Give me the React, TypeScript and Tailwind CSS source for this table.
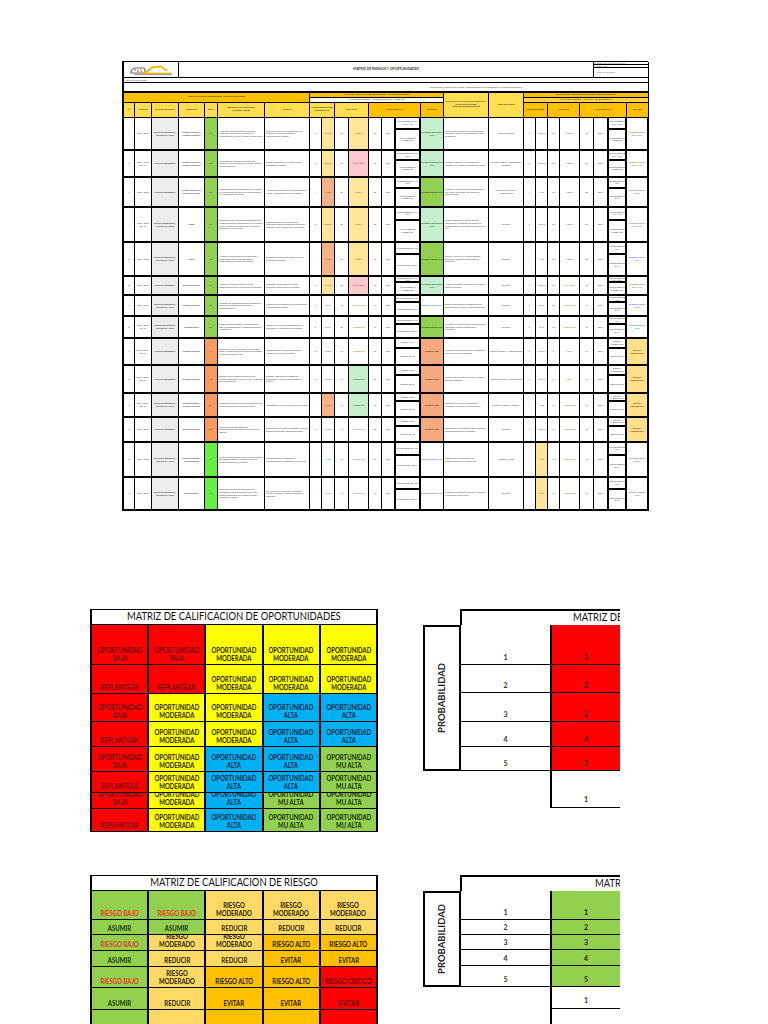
import clsx from "clsx"

const GRID =
  "grid grid-cols-[11px_17px_27px_26px_13px_47px_45px_12px_13px_14px_20px_13px_13px_26px_23px_45px_35px_12px_12px_12px_20px_14px_14px_19px_22px]"

const cell = "border-r border-b-2 border-black overflow-hidden flex items-center justify-center text-center"
const hcell = "border-r border-b border-black overflow-hidden flex items-center justify-center text-center"
const head = "border-r border-b border-black overflow-hidden flex items-center justify-center text-center font-bold text-[2.4px] leading-[2.8px] text-[#333] px-[1px]"

const G = "bg-[#92d050]"
const OR = "bg-[#f79a5e]"
const LIME = "bg-[#66ee44]"

type Lbl = [string, string, string]

type Row = {
  h: string
  f: string
  m: string
  pr: string
  d: string
  dBg: string
  de: string
  ca: string
  p: string
  pl: Lbl
  i: string
  il: Lbl
  nv: string
  sp: [string, string]
  es: Lbl
  ac: string
  rs: string
  p2: string
  pl2: Lbl
  i2: string
  il2: Lbl
  nv2: string
  sp2: [string, string]
  es2: Lbl
}

const Y: [string, string] = ["bg-[#ffe699]", "text-[#9c5700]"]
const PK: [string, string] = ["bg-[#ffc7ce]", "text-[#9c0006]"]
const SAL: [string, string] = ["bg-[#f4b183]", "text-[#333]"]
const WB: [string, string] = ["bg-white", "text-[#2f6fd0]"]
const WG: [string, string] = ["bg-white", "text-[#4f9a28]"]
const LG: [string, string] = ["bg-[#c6efce]", "text-[#006100]"]
const LM: [string, string] = ["bg-[#92d050]", "text-[#1d3a0a]"]
const OE: [string, string] = ["bg-[#f4a97e]", "text-[#5a2000]"]
const YE: [string, string] = ["bg-[#ffe08a]", "text-[#5a4000]"]

const rows: Row[] = [
  {
    h: "h-[33px]", f: "DOFA 2023", m: "Procesos Estratégicos / Procesos de Apoyo", pr: "Gestión Gerencial / Gestión Comercial", d: "O1", dBg: G,
    de: "Aumento de la demanda de alquiler de maquinaria pesada por proyectos de infraestructura vial en la región y obras civiles.",
    ca: "Inversión pública en proyectos de vías terciarias y mejoramiento de la infraestructura regional.",
    p: "3", pl: ["MEDIO", ...Y], i: "20", il: ["MEDIO", ...Y], nv: "60", sp: ["OPORTUNIDAD MUY ALTA (≥40)", "OPORTUNIDAD MODERADA"], es: ["OPORTUNIDAD MUY ALTA", ...LG],
    ac: "Realizar seguimiento a las propuestas de licitación. Ampliar la capacidad de la flota de equipos.", rs: "Gerente General",
    p2: "3", pl2: ["MEDIO", ...WB], i2: "20", il2: ["MEDIO", ...WB], nv2: "60", sp2: ["OPORTUNIDAD MUY ALTA", "OPORTUNIDAD MODERADA"], es2: ["OPORTUNIDAD MUY ALTA", ...WG],
  },
  {
    h: "h-[27px]", f: "DOFA 2023 Rev. 01", m: "Procesos Estratégicos", pr: "Gestión Gerencial / Gestión Comercial", d: "O2", dBg: G,
    de: "Posibilidad de ampliar la cobertura del servicio a nuevos clientes del sector minero y de hidrocarburos.",
    ca: "Nuevos contratos en el sector minero energético de la zona.",
    p: "3", pl: ["MEDIO", ...Y], i: "20", il: ["MUY ALTO", ...PK], nv: "60", sp: ["OPORTUNIDAD MUY ALTA", "OPORTUNIDAD MODERADA"], es: ["OPORTUNIDAD MUY ALTA", ...LG],
    ac: "Elaborar y ejecutar el plan comercial. Participar en ruedas de negocio del sector.", rs: "Gerente General / Coordinador Comercial",
    p2: "3", pl2: ["MEDIO", ...WB], i2: "20", il2: ["MEDIO", ...WB], nv2: "60", sp2: ["OPORTUNIDAD MUY ALTA", "OPORTUNIDAD MODERADA"], es2: ["OPORTUNIDAD MUY ALTA", ...WG],
  },
  {
    h: "h-[30px]", f: "DOFA 2023", m: "Procesos Estratégicos", pr: "Gestión Comercial y Servicio al Cliente", d: "O3", dBg: G,
    de: "Reconocimiento de la empresa por la calidad en la prestación del servicio y cumplimiento en los tiempos de entrega.",
    ca: "Aplicación de evaluación de satisfacción al cliente y seguimiento a los resultados.",
    p: "4", pl: ["ALTO", ...SAL], i: "20", il: ["MEDIO", ...Y], nv: "80", sp: ["OPORTUNIDAD MUY ALTA", "OPORTUNIDAD MODERADA"], es: ["OPORTUNIDAD ALTA", ...LM],
    ac: "Mantener las mediciones de satisfacción del cliente. Fortalecer los canales de comunicación.", rs: "Dirección Comercial / Administrativo",
    p2: "4", pl2: ["ALTO", ...WB], i2: "20", il2: ["MEDIO", ...WB], nv2: "80", sp2: ["OPORTUNIDAD ALTA", "OPORTUNIDAD BAJA"], es2: ["OPORTUNIDAD ALTA", ...WB],
  },
  {
    h: "h-[35px]", f: "DOFA 2023 Rev. 01", m: "Procesos Estratégicos / Procesos de Apoyo", pr: "Todos", d: "O4", dBg: G,
    de: "Implementar herramientas tecnológicas para el seguimiento de la maquinaria en los frentes de obra, control de combustible y horas de operación de los equipos.",
    ca: "Disponibilidad de proveedores de tecnología satelital. Reducción de costos operativos por el control de los recursos.",
    p: "3", pl: ["MEDIO", ...Y], i: "20", il: ["MEDIO", ...Y], nv: "60", sp: ["OPORTUNIDAD MUY ALTA", "OPORTUNIDAD MODERADA"], es: ["OPORTUNIDAD MUY ALTA", ...LG],
    ac: "Cotizar sistemas de rastreo satelital. Implementar el software de control de mantenimiento. Capacitar al personal en el uso.", rs: "Gerencia",
    p2: "3", pl2: ["MEDIO", ...WB], i2: "20", il2: ["MEDIO", ...WB], nv2: "60", sp2: ["OPORTUNIDAD MUY ALTA", "OPORTUNIDAD MODERADA"], es2: ["OPORTUNIDAD MUY ALTA", ...WG],
  },
  {
    h: "h-[34px]", f: "DOFA 2023", m: "Procesos Estratégicos / Procesos de Apoyo", pr: "Todos", d: "O5", dBg: G,
    de: "Alianzas con proveedores de repuestos y combustibles que permitan obtener descuentos por volumen de compra.",
    ca: "Relaciones comerciales estables con los proveedores críticos.",
    p: "4", pl: ["ALTO", ...SAL], i: "20", il: ["MEDIO", ...Y], nv: "80", sp: ["OPORTUNIDAD ALTA", "OPORTUNIDAD BAJA"], es: ["OPORTUNIDAD ALTA", ...LM],
    ac: "Evaluar y reevaluar a los proveedores. Establecer acuerdos comerciales de suministro.", rs: "Compras",
    p2: "4", pl2: ["ALTO", ...WB], i2: "20", il2: ["MEDIO", ...WB], nv2: "80", sp2: ["OPORTUNIDAD ALTA", "OPORTUNIDAD BAJA"], es2: ["OPORTUNIDAD ALTA", ...WB],
  },
  {
    h: "h-[19px]", f: "DOFA 2023", m: "Procesos Estratégicos", pr: "Gestión Gerencial", d: "O6", dBg: G,
    de: "Acceso a líneas de crédito con tasas preferenciales para la renovación de equipos.",
    ca: "Programas de fomento del sector financiero. Buen historial crediticio.",
    p: "3", pl: ["MEDIO", ...Y], i: "20", il: ["MUY ALTO", ...PK], nv: "60", sp: ["OPORTUNIDAD MUY ALTA", "OPORTUNIDAD MODERADA"], es: ["OPORTUNIDAD MUY ALTA", ...LG],
    ac: "Analizar las ofertas de crédito. Presentar el plan de inversión.", rs: "Gerencia",
    p2: "3", pl2: ["MEDIO", ...WB], i2: "20", il2: ["MUY ALTO", ...WG], nv2: "60", sp2: ["OPORTUNIDAD MUY ALTA", "OPORTUNIDAD MODERADA"], es2: ["OPORTUNIDAD MUY ALTA", ...WG],
  },
  {
    h: "h-[21px]", f: "DOFA 2023", m: "Procesos Estratégicos / Procesos de Apoyo", pr: "Gestión Gerencial", d: "O7", dBg: G,
    de: "Participar en convocatorias de contratación pública con entidades territoriales y departamentales.",
    ca: "Publicación de procesos en las plataformas de contratación estatal.",
    p: "2", pl: ["BAJO", ...WB], i: "20", il: ["MODERADO", ...WG], nv: "40", sp: ["OPORTUNIDAD ALTA", "OPORTUNIDAD BAJA"], es: ["OPORTUNIDAD ALTA", ...WB],
    ac: "Revisar diariamente las plataformas de contratación y preparar la documentación.", rs: "Gerencia",
    p2: "2", pl2: ["BAJO", ...WB], i2: "20", il2: ["MODERADO", ...WG], nv2: "40", sp2: ["OPORTUNIDAD ALTA", "OPORTUNIDAD BAJA"], es2: ["OPORTUNIDAD ALTA", ...WB],
  },
  {
    h: "h-[22px]", f: "DOFA 2023 Rev. 01", m: "Procesos Estratégicos / Procesos de Apoyo", pr: "Infraestructura", d: "O8", dBg: G,
    de: "Disponibilidad de patios y talleres propios para el mantenimiento y almacenamiento de la maquinaria.",
    ca: "Contar con un predio adecuado para la operación y la custodia de los equipos.",
    p: "2", pl: ["BAJO", ...WB], i: "20", il: ["MODERADO", ...WG], nv: "40", sp: ["OPORTUNIDAD ALTA", "OPORTUNIDAD BAJA"], es: ["OPORTUNIDAD ALTA", ...LM],
    ac: "Mantener las instalaciones en condiciones adecuadas. Realizar inspecciones periódicas.", rs: "Gerencia",
    p2: "2", pl2: ["BAJO", ...WB], i2: "20", il2: ["MODERADO", ...WG], nv2: "40", sp2: ["OPORTUNIDAD ALTA", "OPORTUNIDAD BAJA"], es2: ["OPORTUNIDAD ALTA", ...WB],
  },
  {
    h: "h-[27px]", f: "DOFA 2023 - Rev. 01", m: "Procesos Estratégicos", pr: "Gestión Gerencial", d: "A1", dBg: OR,
    de: "Incremento de los precios de los repuestos, llantas y combustibles que afectan los costos de operación del servicio.",
    ca: "Inestabilidad de la economía nacional. Variación de la tasa de cambio.",
    p: "3", pl: ["MEDIO", ...WB], i: "10", il: ["MODERADO", ...WG], nv: "30", sp: ["RIESGO ALTO", "RIESGO BAJO"], es: ["RIESGO ALTO", ...OE],
    ac: "Actualizar las tarifas del servicio. Negociar precios con los proveedores.", rs: "Gerencia General / Administrativo",
    p2: "3", pl2: ["MEDIO", ...WG], i2: "5", il2: ["LEVE", ...WG], nv2: "15", sp2: ["RIESGO MODERADO", "RIESGO BAJO"], es2: ["RIESGO MODERADO", ...YE],
  },
  {
    h: "h-[28px]", f: "DOFA 2023 - Rev. 01", m: "Procesos Estratégicos", pr: "Gestión Gerencial", d: "A2", dBg: OR,
    de: "Retrasos en los pagos por parte de los clientes afectando el flujo de caja y la liquidez de la organización.",
    ca: "Trámites internos de las entidades contratantes. Falta de seguimiento a la cartera.",
    p: "3", pl: ["MEDIO", ...WB], i: "10", il: ["MODERADO", ...LG], nv: "30", sp: ["RIESGO ALTO", "RIESGO BAJO"], es: ["RIESGO ALTO", ...OE],
    ac: "Realizar seguimiento semanal a la cartera. Solicitar anticipos.", rs: "Gerencia General / Contabilidad",
    p2: "3", pl2: ["MEDIO", ...WG], i2: "5", il2: ["LEVE", ...WG], nv2: "15", sp2: ["RIESGO MODERADO", "RIESGO BAJO"], es2: ["RIESGO MODERADO", ...YE],
  },
  {
    h: "h-[24px]", f: "DOFA 2023 - Rev. 01", m: "Procesos Estratégicos / Procesos de Apoyo", pr: "Gestión personal / Gestión Gerencial", d: "D1", dBg: OR,
    de: "Rotación del personal operativo calificado por mejores ofertas en el mercado laboral.",
    ca: "Competencia en el sector. Escalas salariales.",
    p: "4", pl: ["ALTO", ...SAL], i: "10", il: ["MODERADO", ...LG], nv: "40", sp: ["RIESGO ALTO", "RIESGO BAJO"], es: ["RIESGO ALTO", ...OE],
    ac: "Implementar el plan de bienestar e incentivos. Fortalecer el clima laboral.", rs: "Gestión Humana / Logística",
    p2: "4", pl2: ["ALTO", ...WB], i2: "10", il2: ["MODERADO", ...WG], nv2: "40", sp2: ["RIESGO MODERADO", "RIESGO BAJO"], es2: ["RIESGO MODERADO", ...YE],
  },
  {
    h: "h-[25px]", f: "DOFA 2023", m: "Procesos Estratégicos", pr: "Gestión Gerencial", d: "D2", dBg: OR,
    de: "Falta de documentación de los procedimientos operativos del servicio de alquiler.",
    ca: "Debilidad en el sistema de gestión. Falta de tiempo del personal. Desconocimiento.",
    p: "3", pl: ["MEDIO", ...WB], i: "10", il: ["MODERADO", ...WG], nv: "30", sp: ["RIESGO ALTO", "RIESGO BAJO"], es: ["RIESGO ALTO", ...OE],
    ac: "Documentar los procedimientos. Socializar los documentos con el personal.", rs: "Calidad",
    p2: "3", pl2: ["MEDIO", ...WB], i2: "10", il2: ["MODERADO", ...WG], nv2: "30", sp2: ["RIESGO MODERADO", "RIESGO BAJO"], es2: ["RIESGO MODERADO", ...YE],
  },
  {
    h: "h-[35px]", f: "DOFA 2023", m: "Procesos Estratégicos / Procesos de Apoyo", pr: "Gestión Logística y Mantenimiento", d: "F1", dBg: LIME,
    de: "Contar con maquinaria propia en buen estado que permite atender oportunamente los requerimientos de los clientes.",
    ca: "Cumplimiento del programa de mantenimiento preventivo de los equipos.",
    p: "4", pl: ["ALTO", ...WB], i: "10", il: ["MODERADO", ...WG], nv: "40", sp: ["OPORTUNIDAD ALTA", "OPORTUNIDAD BAJA"], es: ["OPORTUNIDAD ALTA", ...WB],
    ac: "Cumplir con el cronograma de mantenimiento de la maquinaria.", rs: "Logística / Taller",
    p2: "4", pl2: ["ALTO", ...Y], i2: "10", il2: ["MODERADO", ...WG], nv2: "40", sp2: ["OPORTUNIDAD ALTA", "OPORTUNIDAD BAJA"], es2: ["OPORTUNIDAD ALTA", ...WB],
  },
  {
    h: "h-[33px]", f: "DOFA 2023", m: "Procesos Estratégicos / Procesos de Apoyo", pr: "Infraestructura", d: "F2", dBg: LIME,
    de: "Experiencia de más de diez años en el mercado del alquiler de maquinaria, con clientes fidelizados en el sector público y privado de la región.",
    ca: "Trayectoria de la empresa. Calidad del servicio prestado y cumplimiento de los contratos.",
    p: "4", pl: ["ALTO", ...WB], i: "10", il: ["MODERADO", ...WG], nv: "40", sp: ["OPORTUNIDAD ALTA", "OPORTUNIDAD BAJA"], es: ["OPORTUNIDAD ALTA", ...WB],
    ac: "Mantener la calidad del servicio. Actualizar el portafolio de servicios.", rs: "Gerencia",
    p2: "4", pl2: ["ALTO", ...Y], i2: "10", il2: ["MODERADO", ...WG], nv2: "40", sp2: ["OPORTUNIDAD ALTA", "OPORTUNIDAD BAJA"], es2: ["OPORTUNIDAD ALTA", ...WB],
  },
]

const tiny = "text-[2.2px] leading-[2.6px] text-[#444]"
const lbl = "text-[2.2px] leading-[2.6px]"

const Logo = () => (
  <svg width="46" height="14" viewBox="0 0 46 14">
    <path d="M3 10 Q3 5 8 5 L15 5 Q17 5 17 7.5 L17 10 Z" fill="none" stroke="#6b6b6b" strokeWidth="1.2" />
    <path d="M6 7 L8 7 M10 6.5 L10 9 M12.5 6.5 L14 9" stroke="#6b6b6b" strokeWidth="1" />
    <path d="M15 10 L24 3.5 L33 2.5 L40 7.5 L38 8.2 L32.5 4.2 L25 5.2 L18.5 10 Z" fill="#f0b400" />
    <rect x="12" y="9.6" width="31" height="1.6" fill="#f0b400" />
    <rect x="6" y="11.2" width="38" height="0.9" fill="#8a8a8a" />
  </svg>
)

const Header = () => (
  <div className={clsx(GRID, "grid-rows-[16px_5px_10px_5px_5px_15px]")}>
    <div className={clsx(hcell, "col-span-3")}>
      <Logo />
    </div>
    <div className={clsx(hcell, "col-span-19 font-bold text-[3.4px] text-[#333]")}>MATRIZ DE RIESGOS Y OPORTUNIDADES</div>
    <div className="col-span-3 border-r border-b border-black flex flex-col text-[2.2px] leading-[2.6px] text-[#555]">
      <div className="h-[3px] border-b border-black px-[1px] overflow-hidden">Código: GG-MT-01 Versión: 02</div>
      <div className="h-[3px] border-b border-black px-[1px] overflow-hidden">Página 1 de 1</div>
      <div className="flex-1 flex items-center px-[2px]">Fecha: 15/03/2023</div>
    </div>
    <div className={clsx("col-span-25 border-r border-b border-black flex items-center px-[1px]", tiny)}>Fecha de actualización:</div>
    <div className={clsx("col-span-25 border-r border-b-2 border-black flex items-center pl-[306px]", tiny)}>
      Seguimiento y control de los riesgos y oportunidades de la organización y sus partes interesadas
    </div>
    <div className={clsx(head, "col-span-7 row-span-2 bg-[#ffc000]")}>IDENTIFICACION DE RIESGOS Y OPORTUNIDADES</div>
    <div className={clsx(head, "col-span-8 bg-[#ffc000]")}>ANALISIS Y EVALUACION DE RIESGOS Y OPORTUNIDADES</div>
    <div className={clsx(head, "row-span-3 bg-[#ffdf4f]")}>ACCIONES PARA EL TRATAMIENTO Y SEGUIMIENTO DEL RIESGO/OPORTUNIDAD</div>
    <div className={clsx(head, "row-span-3 bg-[#ffdf4f]")}>RESPONSABLE</div>
    <div className={clsx(head, "col-span-8 bg-[#ffc000]")}>EVALUACION DEL RIESGO/OPORTUNIDAD RESIDUAL</div>
    <div className={clsx(head, "col-span-8 bg-white font-normal")}>VALOR DEL RIESGO / OPORTUNIDAD INHERENTE</div>
    <div className={clsx(head, "col-span-8 bg-[#ffd34d] font-normal")}>VALOR DEL RIESGO / OPORTUNIDAD RESIDUAL</div>
    <div className={clsx(head, "bg-[#ffdf4f]")}>N°</div>
    <div className={clsx(head, "bg-[#ffdf4f]")}>FUENTE</div>
    <div className={clsx(head, "bg-[#ffdf4f]")}>MACROPROCESO</div>
    <div className={clsx(head, "bg-[#ffdf4f]")}>PROCESO</div>
    <div className={clsx(head, "bg-[#ffdf4f]")}>DOFA</div>
    <div className={clsx(head, "bg-[#ffdf4f]")}>DESCRIPCION RIESGO U OPORTUNIDAD</div>
    <div className={clsx(head, "bg-[#ffdf4f]")}>CAUSAS</div>
    <div className={clsx(head, "col-span-2 bg-[#ffdf4f]")}>PROBABILIDAD DE OCURRENCIA</div>
    <div className={clsx(head, "col-span-2 bg-[#ffdf4f]")}>IMPACTO</div>
    <div className={clsx(head, "col-span-3 bg-[#ffc000]")}>NIVEL DE R / O</div>
    <div className={clsx(head, "bg-[#ffc000]")}>ESTADO</div>
    <div className={clsx(head, "col-span-2 bg-[#ffc000]")}>PROBABILIDAD</div>
    <div className={clsx(head, "col-span-2 bg-[#ffc000]")}>IMPACTO</div>
    <div className={clsx(head, "col-span-3 bg-[#ffc000]")}>NIVEL DE R / O</div>
    <div className={clsx(head, "bg-[#ffc000]")}>ESTADO</div>
  </div>
)

const Split = ({ top, bottom }: { top: string; bottom: string }) => (
  <div className="border-r-2 border-b-2 border-l border-black flex flex-col overflow-hidden">
    <div className={clsx("h-[38%] border-b-2 border-black flex items-center justify-center text-center overflow-hidden", tiny)}>{top}</div>
    <div className={clsx("flex-1 flex items-center justify-center text-center overflow-hidden", tiny)}>{bottom}</div>
  </div>
)

const BodyRow = ({ r, n }: { r: Row; n: number }) => (
  <div className={clsx(GRID, r.h)}>
    <div className={clsx(cell, tiny)}>{n}</div>
    <div className={clsx(cell, tiny)}>{r.f}</div>
    <div className={clsx(cell, tiny, "bg-[#ececec] font-bold")}>{r.m}</div>
    <div className={clsx(cell, tiny, "font-bold")}>{r.pr}</div>
    <div className={clsx(cell, tiny, r.dBg)}>{r.d}</div>
    <div className={clsx(cell, tiny, "text-left justify-start px-[1px]")}>{r.de}</div>
    <div className={clsx(cell, tiny, "text-left justify-start px-[1px]")}>{r.ca}</div>
    <div className={clsx(cell, tiny)}>{r.p}</div>
    <div className={clsx(cell, lbl, r.pl[1], r.pl[2])}>{r.pl[0]}</div>
    <div className={clsx(cell, tiny)}>{r.i}</div>
    <div className={clsx(cell, lbl, r.il[1], r.il[2])}>{r.il[0]}</div>
    <div className={clsx(cell, tiny)}>{r.nv}</div>
    <div className={clsx(cell, tiny)}>80%</div>
    <Split top={r.sp[0]} bottom={r.sp[1]} />
    <div className={clsx(cell, lbl, "font-bold", r.es[1], r.es[2])}>{r.es[0]}</div>
    <div className={clsx(cell, tiny, "text-left justify-start px-[1px]")}>{r.ac}</div>
    <div className={clsx(cell, tiny)}>{r.rs}</div>
    <div className={clsx(cell, tiny)}>{r.p2}</div>
    <div className={clsx(cell, lbl, r.pl2[1], r.pl2[2])}>{r.pl2[0]}</div>
    <div className={clsx(cell, tiny)}>{r.i2}</div>
    <div className={clsx(cell, lbl, r.il2[1], r.il2[2])}>{r.il2[0]}</div>
    <div className={clsx(cell, tiny)}>{r.nv2}</div>
    <div className={clsx(cell, tiny)}>80%</div>
    <Split top={r.sp2[0]} bottom={r.sp2[1]} />
    <div className={clsx(cell, lbl, "font-bold border-r-2", r.es2[1], r.es2[2])}>{r.es2[0]}</div>
  </div>
)

type MC = [string, string, string]

const R: [string, string] = ["bg-[#ff0000]", "text-[#6e0000]"]
const YY: [string, string] = ["bg-[#ffff00]", "text-[#262600]"]
const BL: [string, string] = ["bg-[#00b0f0]", "text-[#0a2a4e]"]
const GR: [string, string] = ["bg-[#92d050]", "text-[#182e08]"]

const OB: MC = ["OPORTUNIDAD\nBAJA", ...R]
const RP: MC = ["REPLANTEAR", ...R]
const OM: MC = ["OPORTUNIDAD\nMODERADA", ...YY]
const OA: MC = ["OPORTUNIDAD\nALTA", ...BL]
const OMA: MC = ["OPORTUNIDAD\nMU ALTA", ...GR]

const oppRows: { h: string; c: MC[] }[] = [
  { h: "h-[40px]", c: [OB, OB, OM, OM, OM] },
  { h: "h-[29px]", c: [RP, RP, OM, OM, OM] },
  { h: "h-[28px]", c: [OB, OM, OM, OA, OA] },
  { h: "h-[25px]", c: [RP, OM, OM, OA, OA] },
  { h: "h-[25px]", c: [OB, OM, OA, OA, OMA] },
  { h: "h-[21px]", c: [RP, OM, OA, OA, OMA] },
  { h: "h-[16px]", c: [OB, OM, OA, OMA, OMA] },
  { h: "h-[23px]", c: [RP, OM, OA, OMA, OMA] },
]

const GB: [string, string] = ["bg-[#92d050]", "text-[#e8361e]"]
const GA: [string, string] = ["bg-[#92d050]", "text-[#182e08]"]
const LO: [string, string] = ["bg-[#ffd966]", "text-[#221c00]"]
const OO: [string, string] = ["bg-[#ffc000]", "text-[#261900]"]
const RR: [string, string] = ["bg-[#ff0000]", "text-[#620000]"]

const RB: MC = ["RIESGO BAJO", ...GB]
const AS: MC = ["ASUMIR", ...GA]
const RM: MC = ["RIESGO\nMODERADO", ...LO]
const RD: MC = ["REDUCIR", ...LO]
const RA: MC = ["RIESGO ALTO", ...OO]
const EV: MC = ["EVITAR", ...OO]
const RC: MC = ["RIESGO CRITICO", ...RR]
const EVR: MC = ["EVITAR", ...RR]

const riskRows: { h: string; c: MC[] }[] = [
  { h: "h-[29px]", c: [RB, RB, RM, RM, RM] },
  { h: "h-[15px]", c: [AS, AS, RD, RD, RD] },
  { h: "h-[16px]", c: [RB, RM, RM, RA, RA] },
  { h: "h-[16px]", c: [AS, RD, RD, EV, EV] },
  { h: "h-[21px]", c: [RB, RM, RA, RA, RC] },
  { h: "h-[22px]", c: [AS, RD, EV, EV, EVR] },
  { h: "h-[30px]", c: [["", ...GA], ["", ...LO], ["", ...OO], ["", ...OO], ["", ...RR]] },
]

const Matrix = ({ title, data }: { title: string; data: { h: string; c: MC[] }[] }) => (
  <div className="ml-[90px] w-[288px] shrink-0">
    <div className="h-[16px] border border-black border-l-2 border-r-2 flex items-center justify-center overflow-hidden">
      <span className="inline-block scale-x-[0.9] whitespace-nowrap text-[10.5px] text-[#111]">{title}</span>
    </div>
    <div className="border-l-2 border-black">
      {data.map((row, ri) => (
        <div key={ri} className={clsx("grid grid-cols-5", row.h)}>
          {row.c.map((c, ci) => (
            <div
              key={ci}
              className={clsx(
                "flex items-end justify-center overflow-hidden pb-[2px] border-r-2 border-b border-black",
                c[1],
              )}
            >
              <span
                className={clsx(
                  "inline-block shrink-0 scale-x-[0.75] text-center whitespace-pre font-bold text-[8px] leading-[8px]",
                  c[2],
                )}
              >
                {c[0]}
              </span>
            </div>
          ))}
        </div>
      ))}
    </div>
  </div>
)

const Side = ({
  title,
  pad,
  heights,
  bg,
  below,
  extra,
}: {
  title: string
  pad: string
  heights: string[]
  bg: string
  below: string
  extra: boolean
}) => (
  <div className="ml-[45px] w-[197px] shrink-0 overflow-hidden">
    <div className="flex">
      <div className="w-[37px] shrink-0" />
      <div className={clsx("h-[16px] w-[320px] shrink-0 border-t-2 border-l-2 border-black flex items-center whitespace-nowrap", pad)}>
        <span className="inline-block origin-left scale-x-[0.9] text-[10.5px] text-[#111]">{title}</span>
      </div>
    </div>
    <div className="flex">
      <div className="w-[38px] shrink-0 border-2 border-black flex items-center justify-center">
        <span className="[writing-mode:vertical-rl] rotate-180 font-bold text-[9.5px] text-[#222]">PROBABILIDAD</span>
      </div>
      <div className="w-[89px] shrink-0 flex flex-col">
        {heights.map((h, i) => (
          <div key={i} className={clsx(h, "border-b border-black flex items-end justify-center pb-[2px] text-[7px] font-bold text-[#333]")}>
            {i + 1}
          </div>
        ))}
      </div>
      <div className="w-[72px] shrink-0 flex flex-col border-l-2 border-black">
        {heights.map((h, i) => (
          <div key={i} className={clsx(h, bg, "border-b border-r-2 border-black flex items-end justify-center pb-[2px] text-[7px] font-bold text-[#2a1a00]")}>
            {i + 1}
          </div>
        ))}
      </div>
    </div>
    <div className="flex">
      <div className="w-[127px] shrink-0" />
      <div className={clsx(below, "w-[72px] shrink-0 border-l-2 border-b border-r-2 border-black flex items-end justify-center pb-[3px] text-[7px] font-bold text-[#333]")}>
        1
      </div>
    </div>
    {extra && (
      <div className="flex">
        <div className="w-[127px] shrink-0" />
        <div className="h-[30px] w-[72px] shrink-0 border-l-2 border-black" />
      </div>
    )}
  </div>
)

export default function App() {
  return (
    <div className="w-[768px] h-[1024px] overflow-hidden bg-white font-[Lato,'Liberation_Sans',sans-serif]">
      <div className="pt-[61px] pl-[122px]">
        <div className="w-[526px] border-l-2 border-t border-black">
          <Header />
          {rows.map((r, i) => (
            <BodyRow key={i} r={r} n={i + 1} />
          ))}
        </div>
      </div>

      <div className="mt-[98px] flex items-start">
        <Matrix title="MATRIZ DE CALIFICACION DE OPORTUNIDADES" data={oppRows} />
        <Side
          title="MATRIZ DE CALIFICACION DE RIESGO / OPORTUNIDADES"
          pad="pl-[111px]"
          heights={["h-[40px]", "h-[28px]", "h-[29px]", "h-[25px]", "h-[24px]"]}
          bg="bg-[#ff0000]"
          below="h-[37px]"
          extra={false}
        />
      </div>

      <div className="mt-[43px] flex items-start">
        <Matrix title="MATRIZ DE CALIFICACION DE RIESGO" data={riskRows} />
        <Side
          title="MATRIZ DE CALIFICACION DE RIESGOS"
          pad="pl-[133px]"
          heights={["h-[29px]", "h-[15px]", "h-[15px]", "h-[16px]", "h-[21px]"]}
          bg="bg-[#92d050]"
          below="h-[22px]"
          extra
        />
      </div>
    </div>
  )
}
